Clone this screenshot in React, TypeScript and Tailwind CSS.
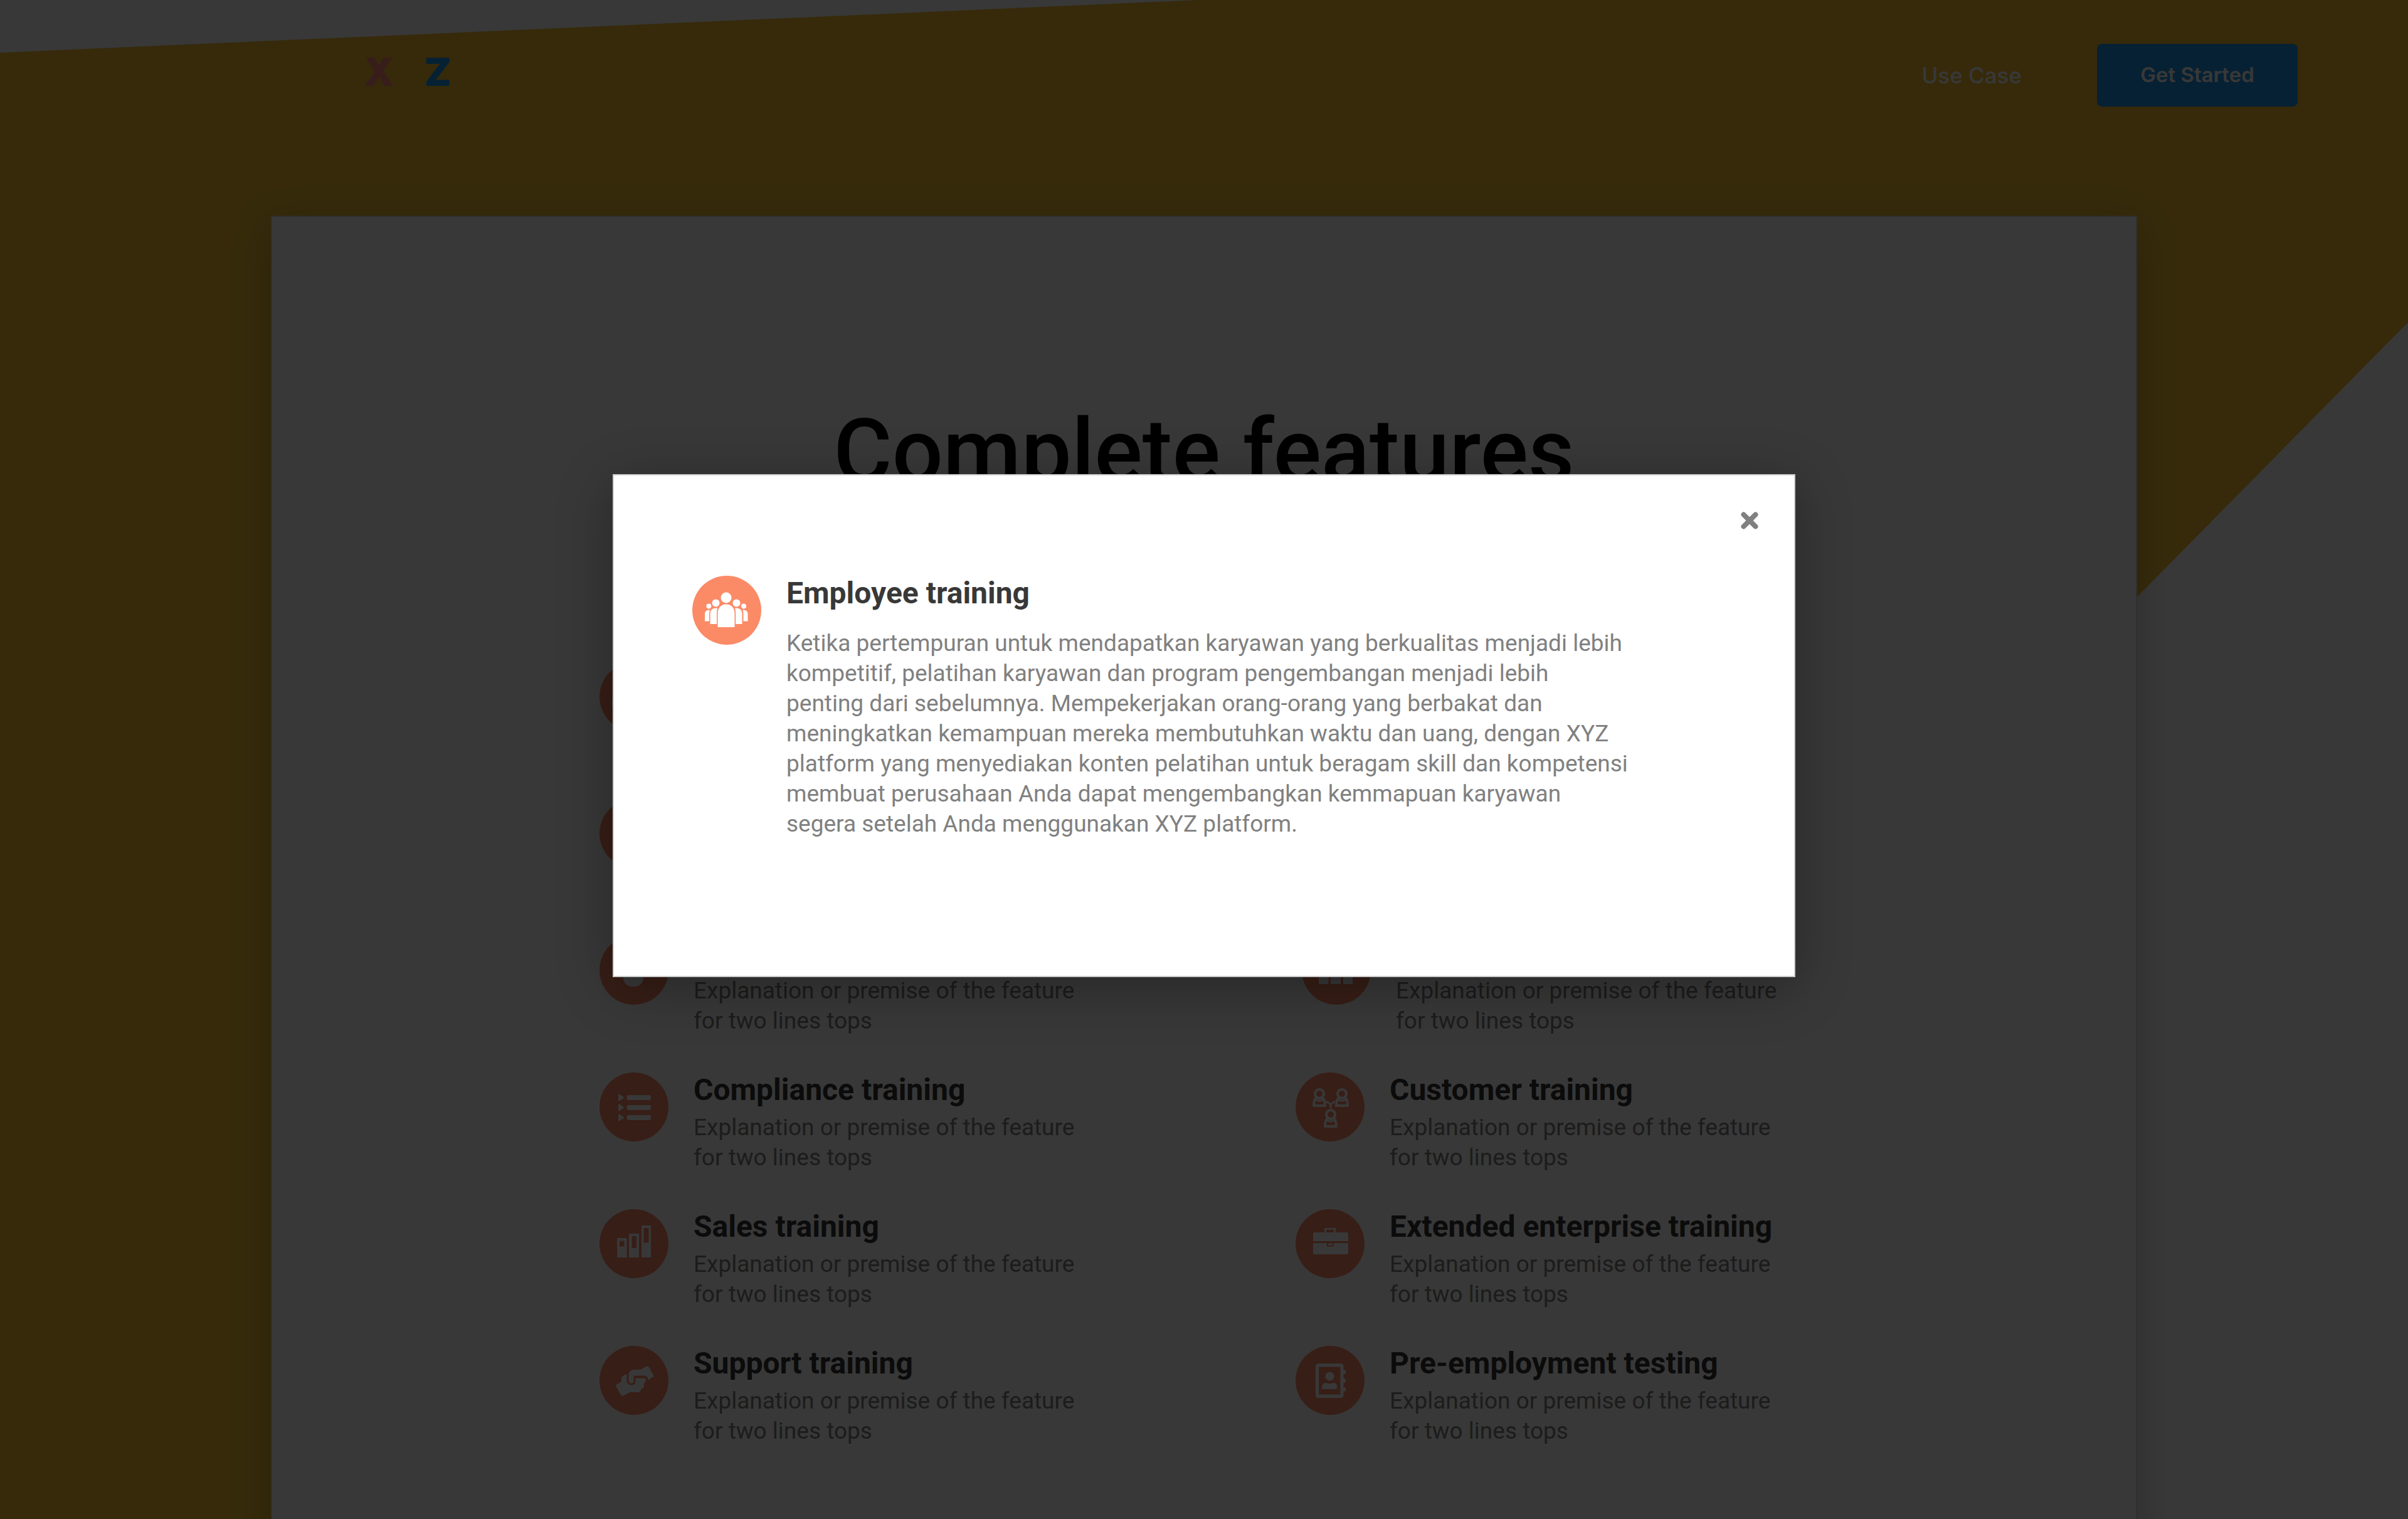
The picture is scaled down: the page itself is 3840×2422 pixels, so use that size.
import type { ReactNode } from "react";

const blurb = "Explanation or premise of the feature for two lines tops";

type FeatureItem = { title?: string; text?: string; icon: ReactNode };

function Icon({ children }: { children?: ReactNode }) {
  return (
    <span className="flex size-[110px] shrink-0 rounded-full bg-[#fb8b67]">
      <svg viewBox="0 0 110 110" className="size-full" fill="#fff" aria-hidden="true">
        {children}
      </svg>
    </span>
  );
}

const people = (
  <>
    <circle cx="54" cy="35" r="8.5" />
    <path d="M40.500 82V60C40.500 51 46 45.500 54 45.500S67.500 51 67.500 60V82Z" />
    <circle cx="37.500" cy="43.500" r="6" />
    <circle cx="70.500" cy="43.500" r="6" />
    <circle cx="26.300" cy="48.500" r="4" />
    <circle cx="82" cy="48.500" r="4" />
    <path d="M28.500 77V61C28.500 54 33 51 40 51.500Q39 55 39 60V77Z" />
    <path d="M79.500 77V61C79.500 54 75 51 68 51.500Q69.200 55 69.200 60V77Z" />
    <path d="M20 72.500V61C20 57 22.500 54.500 28 54.500Q27 57 27 61V72.500Z" />
    <path d="M88.500 72.500V61C88.500 57 86 54.500 80.500 54.500Q81.500 57 81.500 61V72.500Z" />
  </>
);

const list = (
  <>
    {[40, 56, 72].map((y) => (
      <g key={y}>
        <path d="M30 -4.500Q30 -6 31.500 -5.500L38.500 -0.700Q39.500 0 38.500 0.700L31.500 5.500Q30 6 30 4.500Z" transform={`translate(0 ${y})`} />
        <rect x="43.500" y={y - 4} width="38.500" height="8" rx="3" />
      </g>
    ))}
  </>
);

const bars = (
  <path
    fillRule="evenodd"
    d="M28 46h15.500v31H28ZM32 50.500v9h7.500v-9ZM47 39h16v38H47ZM51.500 43v19h7.500V43ZM67 26h15v51H67ZM70.500 30v23.500h8V30Z"
  />
);

const hands = (
  <>
    <path d="M43.500 44.500L36 49C34.500 51 35 54 35 57L27.500 61.500Q25.500 63 26.500 65L34.500 78.500Q36 80.500 38 79.500L48 74H61Q66 74 66.500 68Q70.500 68 71 64V59Q73.500 58.500 73.500 57V53.500Q73.500 51.500 71 51.500H57.500V57C57.500 60 55 62.500 51.500 62.500S44 60 43.500 57Z" />
    <path d="M46.500 44Q49 38.500 54 38H65L75 32.500Q77 31.500 78.500 33.500L86 46.500Q87 48.500 85.500 49.500L77 54.500V52Q76.500 47.500 72 47.500H54.500V56Q54 59.500 51 59.500T46.500 56Z" />
  </>
);

const person = (
  <g fill="none" stroke="#fff" strokeWidth="4">
    <circle cx="0" cy="0" r="7" />
    <path d="M-5 6C-8.500 9 -9 13 -9 19H9C9 13 8.500 9 5 6" strokeLinejoin="round" />
    <path d="M-6 9.500Q0 12.500 6 9.500" strokeWidth="3" />
  </g>
);

const network = (
  <>
    <g transform="translate(38 34)">{person}</g>
    <g transform="translate(74 34)">{person}</g>
    <g transform="translate(56 67)">{person}</g>
    <path d="M49 46L56 51L63 46M56 51V57" fill="none" stroke="#fff" strokeWidth="3" />
  </>
);

const briefcase = (
  <>
    <path fillRule="evenodd" d="M46 37V30H64V37H81.500Q84 37 84 39.500V51H28V39.500Q28 37 30.500 37ZM49 32.500V37H61V32.500Z" />
    <path fillRule="evenodd" d="M28 54H50V59.500H61V54H84V69.500Q84 72 81.500 72H30.500Q28 72 28 69.500Z" />
    <rect x="52" y="54.500" width="7.500" height="3" />
  </>
);

const contact = (
  <>
    <path
      fillRule="evenodd"
      d="M36 28H72Q76.500 28 76.500 32.500V38H78.500Q80 38 80 40V43.500Q80 45 78.500 45H76.500V52H78.500Q80 52 80 54V57Q80 59 78.500 59H76.500V66H78.500Q80 66 80 68V71Q80 72.500 78.500 72.500H76.500V78.500Q76.500 83 72 83H36Q32 83 32 78.500V32.500Q32 28 36 28ZM37 33.500V77.500H71.500V33.500Z"
    />
    <circle cx="54.500" cy="48.500" r="7" />
    <path d="M42 66.500C42 61 45 58.500 48.500 59Q54.500 61 60.500 59C64 58.500 66.500 61 66.500 66.500Q66.500 69 64 69H44.500Q42 69 42 66.500Z" />
  </>
);

const upperBars = <path d="M27 46h15.500v31H27ZM46 39h16v38H46ZM66 26h15v51H66Z" />;

const drop = <rect x="38" y="28" width="32" height="53" rx="14" />;

const upper: FeatureItem[] = [
  { icon: people },
  { icon: null },
  { icon: null },
  { icon: null },
  { icon: drop, text: blurb },
  { icon: upperBars, text: blurb },
];

const lower: FeatureItem[] = [
  { title: "Compliance training", text: blurb, icon: list },
  { title: "Customer training", text: blurb, icon: network },
  { title: "Sales training", text: blurb, icon: bars },
  { title: "Extended enterprise training", text: blurb, icon: briefcase },
  { title: "Support training", text: blurb, icon: hands },
  { title: "Pre-employment testing", text: blurb, icon: contact },
];

function Feature({ title, text, icon }: FeatureItem) {
  return (
    <li className="flex min-h-40 gap-10">
      <Icon>{icon}</Icon>
      <div className="w-[640px]">
        <div className="min-h-14">
          {title && <h2 className="text-[48px] leading-14 font-bold whitespace-nowrap text-[#333]">{title}</h2>}
        </div>
        {text && <p className="mt-2 text-[37px] leading-12 text-[#808080]">{text}</p>}
      </div>
    </li>
  );
}

export default function App() {
  return (
    <div className="relative h-screen overflow-hidden bg-white font-['Roboto',sans-serif]">
      <svg className="absolute inset-0 size-full" viewBox="0 0 3840 2422" preserveAspectRatio="none" aria-hidden="true">
        <path d="M0 84L1910 0H3840V514L1957 2422H0Z" fill="#f3c032" />
      </svg>

      <div className="relative">
        <header className="flex items-start pt-[70px] pr-44 pl-[580px] font-['Inter',sans-serif]">
          <a href="#" aria-label="XYZ" className="text-[62px] leading-[90px] font-black">
            <span className="text-[#fb8b77]">X</span>
            <span className="text-[#f3c032]">Y</span>
            <span className="text-[#1c98e8]">Z</span>
          </a>
          <a href="#" className="ml-auto text-[35px] leading-[100px] font-medium text-white">Use Case</a>
          <button type="button" className="ml-[120px] h-[100px] w-80 rounded-lg bg-[#1c98e8] text-[33px] font-semibold text-white">
            Get Started
          </button>
        </header>

        <main className="mx-[432px] mt-[174px] border-2 border-[#d9d9d9] bg-white pt-[290px] pb-40 shadow-[0_16px_60px_rgba(0,0,0,0.2)]">
          <h1 className="text-center text-[143px] leading-[168px] font-medium text-black">Complete features</h1>
          <ul className="mt-[252px] ml-[522px] grid grid-cols-[max-content_max-content] gap-x-[330px] gap-y-[58px]">
            {upper.map((f, i) => (
              <Feature key={i} {...f} />
            ))}
          </ul>
          <ul className="mt-[58px] ml-[522px] grid grid-cols-[max-content_max-content] gap-x-[320px] gap-y-[58px]">
            {lower.map((f) => (
              <Feature key={f.title} {...f} />
            ))}
          </ul>
        </main>
      </div>

      <div className="absolute inset-0 flex items-start justify-center bg-black/78 pt-[756px]">
        <section
          role="dialog"
          aria-modal="true"
          aria-labelledby="dialog-title"
          className="relative flex min-h-[802px] w-[1886px] gap-10 border-2 border-[#ccc] bg-white pt-40 pl-[125px] shadow-[0_16px_80px_rgba(0,0,0,0.3)]"
        >
          <button type="button" aria-label="Close" className="absolute top-[58px] right-[57px] size-7">
            <svg viewBox="0 0 28 28" className="size-full" fill="none" stroke="#808080" strokeWidth="8" strokeLinecap="round" aria-hidden="true">
              <path d="M4.500 4.500L23.500 23.500M23.500 4.500L4.500 23.500" />
            </svg>
          </button>
          <Icon>{people}</Icon>
          <div>
            <h2 id="dialog-title" className="text-[48px] leading-14 font-bold text-[#383838]">Employee training</h2>
            <p className="mt-7 w-[1400px] text-[37px] leading-12 text-[#808080]">
              Ketika pertempuran untuk mendapatkan karyawan yang berkualitas menjadi lebih
              <br />
              kompetitif, pelatihan karyawan dan program pengembangan menjadi lebih
              <br />
              penting dari sebelumnya. Mempekerjakan orang-orang yang berbakat dan
              <br />
              meningkatkan kemampuan mereka membutuhkan waktu dan uang, dengan XYZ
              <br />
              platform yang menyediakan konten pelatihan untuk beragam skill dan kompetensi
              <br />
              membuat perusahaan Anda dapat mengembangkan kemmapuan karyawan
              <br />
              segera setelah Anda menggunakan XYZ platform.
            </p>
          </div>
        </section>
      </div>
    </div>
  );
}
